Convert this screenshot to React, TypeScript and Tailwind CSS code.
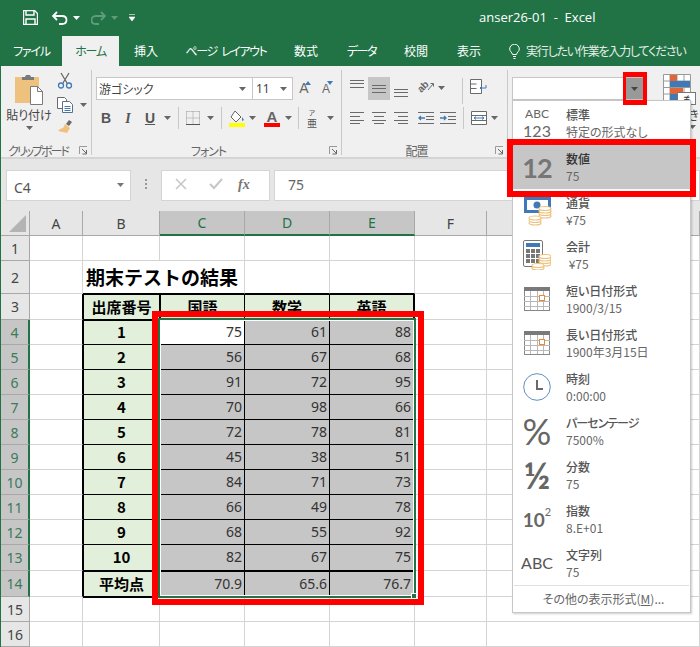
import type { ReactNode } from "react";

const students: Array<[number, number, number, number]> = [
  [1, 75, 61, 88],
  [2, 56, 67, 68],
  [3, 91, 72, 95],
  [4, 70, 98, 66],
  [5, 72, 78, 81],
  [6, 45, 38, 51],
  [7, 84, 71, 73],
  [8, 66, 49, 78],
  [9, 68, 55, 92],
  [10, 82, 67, 75],
];

const Caret = ({ color = "#666" }: { color?: string }) => (
  <svg width="7" height="4" viewBox="0 0 7 4" className="shrink-0">
    <path d="M0 0h7L3.5 4z" fill={color} />
  </svg>
);

const Launcher = () => (
  <svg width="9" height="9" viewBox="0 0 9 9" className="shrink-0">
    <path d="M.5 8V.5H8" fill="none" stroke="#999" />
    <path d="M3 3l4 4M7.500 4v4h-4" fill="none" stroke="#666" />
  </svg>
);

const Sep = () => <div className="mx-[5px] h-[22px] w-px bg-[#c8c8c8]" />;

const Lines = ({ rows, w = 15, h = 16 }: { rows: Array<[number, number, number]>; w?: number; h?: number }) => (
  <svg width={w} height={h} viewBox={`0 0 ${w} ${h}`} className="shrink-0">
    {rows.map(([x1, x2, y]) => (
      <path key={`${x1}-${y}`} d={`M${x1} ${y + 0.5}H${x2}`} stroke="#6a6a6a" />
    ))}
  </svg>
);

const Group = ({ width, label, tight, children }: { width: string; label: string; tight?: boolean; children: ReactNode }) => (
  <div className={`relative mt-[4px] mb-[2px] flex shrink-0 flex-col border-r border-[#c8c8c8] ${width}`}>
    <div className="h-[76px] shrink-0">{children}</div>
    <div
      className={[
        "flex h-[9px] items-center justify-center pr-[16px] text-[12px] whitespace-nowrap text-[#666]",
        tight ? "tracking-[-2px]" : "tracking-[-1px]",
      ].join(" ")}
    >
      {label}
    </div>
    <div className="absolute right-[3px] bottom-0">
      <Launcher />
    </div>
  </div>
);

const ClipboardGroup = () => (
  <Group width="w-[91px]" label="クリップボード" tight>
    <div className="flex pt-[4px]">
      <div className="flex w-[56px] flex-col items-center">
        <svg width="30" height="32" viewBox="0 0 30 32">
          <rect x="1" y="3" width="24" height="26" fill="#eec27e" />
          <path d="M8 6V3h3l1-2h4l1 2h3v3z" fill="#7a7a7a" />
          <path d="M16.500 12.500h7l5 5v13h-12z" fill="#fff" stroke="#7a7a7a" />
          <path d="M23.500 12.500v5h5" fill="none" stroke="#7a7a7a" />
        </svg>
        <div className="mt-[1px] text-[12px] leading-[16px] text-[#444]">貼り付け</div>
        <div className="mt-[3px]">
          <Caret />
        </div>
      </div>
      <div className="-mt-[2px] flex flex-col items-start">
        <svg width="16" height="17" viewBox="0 0 16 17" className="mb-[8px]">
          <path d="M4 1l6 10M12 1L6 11" stroke="#6a6a6a" strokeWidth="1.300" fill="none" />
          <circle cx="4" cy="13.500" r="2.500" fill="none" stroke="#3f79b8" strokeWidth="1.300" />
          <circle cx="12" cy="13.500" r="2.500" fill="none" stroke="#3f79b8" strokeWidth="1.300" />
        </svg>
        <div className="mb-[5px] flex items-center gap-[7px]">
          <svg width="16" height="16" viewBox="0 0 16 16">
            <path d="M.5.500h7l2 2v9h-9z" fill="#fff" stroke="#6a6a6a" />
            <path d="M5.500 4.500h7l3 3v8h-10z" fill="#fff" stroke="#5b6f8a" />
            <path d="M7.500 9.500h6M7.500 11.500h6M7.500 13.500h6" stroke="#3f79b8" />
          </svg>
          <Caret />
        </div>
        <svg width="16" height="16" viewBox="0 0 16 16">
          <path d="M9 6l3-4 3 2-3 4z" fill="#6a6a6a" />
          <path d="M8 6l5 4-3 5-9-2 2-2 3-1z" fill="#eec27e" />
        </svg>
      </div>
    </div>
  </Group>
);

const FontGroup = () => (
  <Group width="w-[250px]" label="フォント">
    <div className="flex h-[36px] items-start pt-[7px] pl-[4px]">
      <div className="flex h-[23px] w-[157px] items-center justify-between border border-[#c6c6c6] bg-white pr-[6px] pl-[2px] text-[12px] text-[#444]">
        <span>游ゴシック</span>
        <Caret />
      </div>
      <div className="flex h-[23px] w-[40px] items-center justify-between border border-l-0 border-[#c6c6c6] bg-white pr-[5px] pl-[3px] text-[12px] text-[#444]">
        <span className="font-['Noto_Sans']">11</span>
        <Caret />
      </div>
      <div className="relative flex h-[23px] w-[22px] items-center justify-center font-['Liberation_Sans'] text-[14px] text-[#666]">
        A
        <svg width="6" height="4" viewBox="0 0 6 4" className="absolute top-[4px] right-[4px]">
          <path d="M0 4h6L3 0z" fill="#3f79b8" />
        </svg>
      </div>
      <div className="relative flex h-[23px] w-[22px] items-center justify-center font-['Liberation_Sans'] text-[12px] text-[#666]">
        A
        <svg width="6" height="4" viewBox="0 0 6 4" className="absolute top-[4px] right-[4px]">
          <path d="M0 0h6L3 4z" fill="#3f79b8" />
        </svg>
      </div>
    </div>
    <div className="flex h-[24px] items-center pl-[3px] font-['Liberation_Sans'] text-[14px] text-[#555]">
      <span className="w-[22px] text-center font-bold">B</span>
      <span className="w-[22px] text-center font-['Liberation_Serif'] font-bold italic">I</span>
      <span className="w-[22px] text-center font-bold underline">U</span>
      <span className="flex w-[12px] justify-center">
        <Caret />
      </span>
      <Sep />
      <svg width="14" height="14" viewBox="0 0 14 14" className="mr-[7px] ml-[2px]">
        <path d="M.5.500h13M.5 7h13M.5 .500v13M7 .500v13M13.500 .500v13" stroke="#999" strokeDasharray="1 1" fill="none" />
        <path d="M0 13.500h14" stroke="#555" />
      </svg>
      <Caret />
      <span className="w-[2px]" />
      <Sep />
      <span className="flex w-[20px] flex-col items-center">
        <svg width="16" height="13" viewBox="0 0 16 13">
          <path d="M6 1l6 6-5 5-5-5z" fill="#fff" stroke="#666" />
          <path d="M13 7l2 3-2 1z" fill="#3f79b8" />
        </svg>
        <span className="h-[4px] w-[16px] bg-[#ffff00]" />
      </span>
      <span className="ml-[1px] flex w-[9px] justify-center">
        <Caret />
      </span>
      <span className="ml-[4px] flex w-[22px] flex-col items-center font-bold leading-[13px]">
        <span className="text-[15px] leading-[13px] text-[#666]">A</span>
        <span className="h-[4px] w-[16px] bg-[#ff0000]" />
      </span>
      <span className="flex w-[10px] justify-center">
        <Caret />
      </span>
      <Sep />
      <span className="flex w-[16px] flex-col items-center font-['Noto_Sans_CJK_JP']">
        <span className="text-[8px] leading-[10px]">ァ</span>
        <span className="text-[10px] leading-[12px]">亜</span>
      </span>
      <span className="ml-[7px]">
        <Caret />
      </span>
    </div>
  </Group>
);

const AlignGroup = () => (
  <Group width="w-[166px]" label="配置">
    <div className="flex h-[36px] items-start pt-[7px] pl-[8px]">
      <div className="flex h-[23px] w-[18px] items-start pt-[3px]">
        <Lines rows={[[0, 14, 0], [0, 14, 3], [0, 14, 7]]} />
      </div>
      <div className="flex h-[23px] w-[22px] items-center justify-center bg-[#c6c6c6]">
        <Lines w={14} h={8} rows={[[0, 14, 0], [0, 14, 3], [0, 14, 7]]} />
      </div>
      <div className="flex h-[23px] w-[28px] items-end pb-[3px] pl-[4px]">
        <Lines w={14} h={8} rows={[[0, 14, 0], [0, 14, 3], [0, 14, 7]]} />
      </div>
      <div className="relative mt-[3px] h-[15px] w-[17px]">
        <span className="absolute top-[1px] -left-[1px] -rotate-45 font-['Liberation_Sans'] text-[10px] leading-[11px] font-bold text-[#666]">ab</span>
        <svg width="17" height="15" viewBox="0 0 17 15" className="absolute top-0 left-0">
          <path d="M10 10l5-6M15.500 3.500h-3M15.500 3.500v3" stroke="#6a6a6a" fill="none" />
        </svg>
      </div>
      <div className="mt-[9px] ml-[3px]">
        <Caret />
      </div>
      <div className="mt-[1px] mr-[7px] ml-[17px] h-[26px] w-px bg-[#c8c8c8]" />
      <svg width="17" height="15" viewBox="0 0 17 15" className="mt-[2px]">
        <path d="M.5.500h11v14h-11zM.5 5h6M.5 9.500h6" fill="#fff" stroke="#6a6a6a" />
        <path d="M16 6v3h-6m2-2l-2 2 2 2" fill="none" stroke="#3f79b8" />
      </svg>
    </div>
    <div className="flex h-[24px] items-center pl-[8px]">
      <Lines w={22} h={12} rows={[[0, 14, 0], [0, 10, 4], [0, 14, 8], [0, 10, 11]]} />
      <Lines w={22} h={12} rows={[[0, 14, 0], [2, 12, 4], [0, 14, 8], [2, 12, 11]]} />
      <Lines w={24} h={12} rows={[[0, 14, 0], [4, 14, 4], [0, 14, 8], [4, 14, 11]]} />
      <svg width="22" height="12" viewBox="0 0 22 12">
        <path d="M7 6H1m2-2L1 6l2 2" stroke="#3f79b8" fill="none" strokeWidth="1.300" />
        <path d="M0 .500h16M8 4.500h8M8 7.500h8M0 11.500h16" stroke="#6a6a6a" />
      </svg>
      <svg width="23" height="12" viewBox="0 0 23 12">
        <path d="M0 6h6M4 4l2 2-2 2" stroke="#3f79b8" fill="none" strokeWidth="1.300" />
        <path d="M0 .500h16M8 4.500h8M8 7.500h8M0 11.500h16" stroke="#6a6a6a" />
      </svg>
      <div className="mr-[7px] h-[22px] w-px bg-[#c8c8c8]" />
      <svg width="16" height="14" viewBox="0 0 16 14">
        <path d="M.5.500h15v13H.5zM.5 4.500h15M.5 9.500h15" fill="#fff" stroke="#6a6a6a" />
        <path d="M3 7h10M5 5.500L3 7l2 1.500M11 5.500L13 7l-2 1.500" stroke="#3f79b8" fill="none" />
      </svg>
      <div className="ml-[4px]">
        <Caret />
      </div>
    </div>
  </Group>
);

const NumberGroup = () => (
  <div className="flex flex-1 pt-[11px] pl-[4px]">
    <div className="flex h-[23px] w-[132px] shrink-0 border border-[#c6c6c6] bg-white">
      <div className="w-[113px]" />
      <div className="flex w-[17px] items-center justify-center bg-[#999]">
        <Caret color="#444" />
      </div>
    </div>
    <div className="ml-[19px] flex w-[37px] shrink-0 flex-col items-start">
      <div className="relative -mt-[3px] h-[28px] w-[30px]">
        <svg width="28" height="27" viewBox="0 0 28 27">
          <path d="M.5.500h27v26H.5zM.5 7h27M.5 13.500h27M.5 20h27M7 .500v26M14 .500v26M21 .500v26" fill="#fff" stroke="#999" />
          <rect x="7" y="1" width="7" height="6" fill="#e0663a" />
          <rect x="7" y="7" width="20" height="6" fill="#3f79b8" />
          <rect x="7" y="14" width="13" height="6" fill="#e0663a" />
          <rect x="7" y="20" width="7" height="6" fill="#3f79b8" />
        </svg>
        <div className="absolute top-[18px] left-[14px] flex h-[13px] w-[19px] items-center justify-center border border-[#777] bg-white font-['Liberation_Sans'] text-[11px] leading-none text-[#333]">
          ≠
        </div>
      </div>
      <div className="mt-[5px] -ml-[11px] text-[12px] leading-[16px] whitespace-nowrap text-[#444]">条件付き</div>
      <div className="mt-[2px] ml-[26px]">
        <Caret />
      </div>
    </div>
  </div>
);

const Ribbon = () => (
  <div className="flex h-[93px] border-b-2 border-[#d4d4d4] bg-[#f0f0f0]">
    <ClipboardGroup />
    <FontGroup />
    <AlignGroup />
    <NumberGroup />
  </div>
);

const tabs: Array<[string, string]> = [
  ["ファイル", "w-[61px] tracking-[-1.2px]"],
  ["ホーム", "w-[57px] tracking-[-1.2px]"],
  ["挿入", "w-[54px]"],
  ["ページ レイアウト", "w-[106px] tracking-[-1.4px] [word-spacing:3px]"],
  ["数式", "w-[54px]"],
  ["データ", "w-[57px] tracking-[-1.5px]"],
  ["校閲", "w-[52px]"],
  ["表示", "w-[54px]"],
];

const TitleBar = () => (
  <div className="flex h-[36px] items-center bg-[#217346] pb-[1px]">
    <svg width="15" height="15" viewBox="0 0 15 15" className="ml-[22px]">
      <path d="M.5.500h11l3 3v11H.5z" fill="none" stroke="#fff" strokeWidth="1.400" />
      <path d="M3 1v4h8V1M3 14V9h9v5" fill="none" stroke="#fff" strokeWidth="1.400" />
    </svg>
    <svg width="16" height="14" viewBox="0 0 16 14" className="ml-[14px]">
      <path d="M5 1L1 5l4 4M1 5h9c6 0 6 8 0 8H7" fill="none" stroke="#fff" strokeWidth="1.800" />
    </svg>
    <div className="ml-[5px]">
      <Caret color="#fff" />
    </div>
    <svg width="15" height="14" viewBox="0 0 15 14" className="ml-[11px]">
      <path d="M10 1l4 4-4 4M14 5H5c-6 0-6 8 0 8h3" fill="none" stroke="#5f9b7d" strokeWidth="1.800" />
    </svg>
    <div className="ml-[5px]">
      <Caret color="#5f9b7d" />
    </div>
    <svg width="6" height="7" viewBox="0 0 6 7" className="ml-[11px]">
      <path d="M0 .500h6M0 3h6L3 7z" fill="#fff" stroke="#fff" strokeWidth=".6" />
    </svg>
    <div className="ml-[344px] font-['Open_Sans'] text-[13px] whitespace-pre text-white">anser26-01  -  Excel</div>
  </div>
);

const TabBar = () => (
  <div className="flex h-[30px] items-stretch bg-[#217346] text-[12px] text-white">
    {tabs.map(([name, width]) => (
      <div
        key={name}
        className={[
          "flex shrink-0 items-center justify-center whitespace-pre",
          width,
          name === "ホーム" ? "bg-[#f0f0f0] text-[#217346]" : "",
        ].join(" ")}
      >
        {name}
      </div>
    ))}
    <div className="ml-[13px] flex items-center gap-[6px] whitespace-nowrap text-[#e6efe9]">
      <svg width="11" height="15" viewBox="0 0 11 15">
        <path d="M3.500 10.500C3 8 .7 7.500.7 5a4.800 4.800 0 0 1 9.600 0c0 2.500-2.300 3-2.800 5.500zM4 12.500h3M4.500 14.500h2" fill="none" stroke="#fff" />
      </svg>
      <span className="tracking-[-1.2px]">実行したい作業を入力してください</span>
    </div>
  </div>
);

const FormulaBar = () => (
  <div className="flex h-[52px] items-start bg-[#e6e6e6] pt-[11px] pl-[5px]">
    <div className="flex h-[31px] w-[125px] items-center justify-between border border-[#d4d4d4] bg-white pt-[3px] pr-[6px] pl-[7px] text-[14px] text-[#555]">
      <span className="font-['Noto_Sans']">C4</span>
      <span className="-mt-[5px]">
        <Caret color="#777" />
      </span>
    </div>
    <div className="flex h-[31px] w-[30px] flex-col items-center justify-center gap-[2px] pb-[4px]">
      <span className="h-[2px] w-[2px] bg-[#999]" />
      <span className="h-[2px] w-[2px] bg-[#999]" />
      <span className="h-[2px] w-[2px] bg-[#999]" />
    </div>
    <div className="flex h-[31px] w-[109px] items-center border border-[#d4d4d4] bg-white pb-[3px]">
      <svg width="12" height="12" viewBox="0 0 12 12" className="ml-[13px]">
        <path d="M1 1l10 10M11 1L1 11" stroke="#c6c6c6" strokeWidth="1.500" />
      </svg>
      <svg width="14" height="12" viewBox="0 0 14 12" className="ml-[22px]">
        <path d="M1 6l4 4 8-9" stroke="#c6c6c6" strokeWidth="2" fill="none" />
      </svg>
      <span className="ml-[15px] font-['Liberation_Serif'] text-[14px] font-bold text-[#777] italic">fx</span>
    </div>
    <div className="ml-[4px] flex h-[31px] flex-1 items-center border border-[#d4d4d4] bg-white pb-[3px] pl-[13px] font-['Noto_Sans'] text-[14px] text-[#666]">
      75
    </div>
  </div>
);

const columnClass = (col: string): string => {
  const selected = col === "C" || col === "D" || col === "E";
  return [
    "flex items-center justify-center border-r border-b font-['Noto_Sans'] text-[14px]",
    selected
      ? "border-r-[#a8a8a8] border-b-2 border-b-[#217346] bg-[#c6c6c6] text-[#217346]"
      : "border-[#a8a8a8] bg-[#e6e6e6] text-[#444]",
  ].join(" ");
};

const RowHead = ({ n }: { n: number }) => {
  const selected = n >= 4 && n <= 14;
  return (
    <div
      className={[
        "flex items-center justify-center border-b font-['Noto_Sans'] text-[14px]",
        selected
          ? "border-r-2 border-r-[#217346] border-b-[#a8a8a8] bg-[#c6c6c6] text-[#3b7a5a]"
          : "border-r border-[#a8a8a8] bg-[#e6e6e6] text-[#444]",
      ].join(" ")}
    >
      {n}
    </div>
  );
};

const Cell = ({ col, row, children }: { col: string; row: number; children?: ReactNode }) => {
  const tableCol = col === "B" || col === "C" || col === "D" || col === "E";
  const inside = tableCol && row >= 3 && row <= 14;
  const head = inside && (col === "B" || row === 3);
  const body = inside && !head;
  const classes = [
    "flex items-center border-r border-b border-[#d4d4d4] whitespace-nowrap",
    inside ? "border-r-black border-b-black" : "",
    head ? "justify-center bg-[#e2efda] text-[15px] font-bold text-black [font-feature-settings:normal]" : "",
    body ? "justify-end pr-[2px] pb-[2px] font-['Noto_Sans'] text-[#333]" : "",
    body && !(row === 4 && col === "C") ? "bg-[#c6c6c6]" : "",
    inside && col === "B" ? "border-l border-l-black font-['Noto_Sans_CJK_JP']" : "",
    inside && col === "C" ? "border-l border-l-black" : "",
    inside && col === "E" ? "border-r-2" : "",
    inside && (row === 3 || row === 4 || row === 14) ? "border-t border-t-black" : "",
    col === "A" && row >= 3 && row <= 14 ? "border-r-black" : "",
    row === 2 && tableCol ? "border-b-black" : "",
    row === 2 && col === "B" ? "border-r-0" : "",
    row === 15 && tableCol ? "border-t border-t-black" : "",
  ].join(" ");
  return <div className={classes}>{children}</div>;
};

const tableCell = (row: number, col: string): ReactNode => {
  if (row === 2 && col === "B") {
    return <span className="pl-[3px] text-[19px] font-bold text-black [font-feature-settings:normal]">期末テストの結果</span>;
  }
  if (row === 3) {
    return { B: "出席番号", C: "国語", D: "数学", E: "英語" }[col] ?? null;
  }
  if (row >= 4 && row <= 13) {
    const s = students[row - 4];
    return { B: s[0], C: s[1], D: s[2], E: s[3] }[col] ?? null;
  }
  if (row === 14) {
    return { B: "平均点", C: "70.9", D: "65.6", E: "76.7" }[col] ?? null;
  }
  return null;
};

const Sheet = () => (
  <div className="relative grid h-[436px] grid-cols-[29px_53px_77px_85px_85px_85px_72px_1fr] grid-rows-[25px_25px_33px_26px_25px_25px_25px_25px_25px_25px_25px_25px_25px_26px_26px_25px_25px] bg-white text-[14px]">
    <div className="flex items-end justify-end border-r border-b border-[#a8a8a8] bg-[#e6e6e6] pr-[3px] pb-[3px]">
      <svg width="17" height="17" viewBox="0 0 17 17">
        <path d="M17 0v17H0z" fill="#b4b4b4" />
      </svg>
    </div>
    {["A", "B", "C", "D", "E", "F", "G"].map((col) => (
      <div key={col} className={columnClass(col)}>
        {col}
      </div>
    ))}
    {Array.from({ length: 16 }, (_, i) => i + 1).map((row) => (
      <div key={row} className="contents">
        <RowHead n={row} />
        {["A", "B", "C", "D", "E", "F", "G"].map((col) => (
          <Cell key={col} col={col} row={row}>
            {tableCell(row, col)}
          </Cell>
        ))}
      </div>
    ))}
    {/* selection outline + fill handle */}
    <div className="pointer-events-none absolute col-start-4 col-end-7 row-start-5 row-end-16 -top-[2px] -right-[1px] -bottom-[1px] -left-[2px] border-2 border-[#217346] shadow-[inset_0_0_0_1px_#fff]">
      <div className="absolute -right-[3px] -bottom-[3px] h-[6px] w-[6px] border border-white bg-[#217346]" />
    </div>
  </div>
);

const Coins = ({ x, y, n }: { x: number; y: number; n: number }) => (
  <g fill="#fff" stroke="#eec27e" strokeWidth="1.200">
    {Array.from({ length: n }, (_, i) => (
      <ellipse key={i} cx={x} cy={y - i * 2.500} rx="6" ry="2" />
    ))}
  </g>
);

const CurrencyIcon = () => (
  <svg width="29" height="30" viewBox="0 0 29 30">
    <rect x="1" y="1" width="27" height="16" fill="#3f79b8" />
    <rect x="4" y="4" width="21" height="10" fill="#fff" />
    <circle cx="14" cy="9" r="3.500" fill="#3f79b8" />
    <Coins x="22" y="20" n={4} />
    <Coins x="12" y="27" n={3} />
  </svg>
);

const CalcIcon = () => (
  <svg width="28" height="30" viewBox="0 0 28 30">
    <rect x=".5" y=".5" width="19" height="26" rx="1.500" fill="#fff" stroke="#777" />
    <rect x="3" y="3" width="14" height="4" fill="#3f79b8" />
    <g fill="#777">
      {[0, 1, 2].flatMap((r) =>
        [0, 1, 2].map((c) => <rect key={`${r}${c}`} x={3 + c * 5} y={9 + r * 5} width="4" height="4" />),
      )}
    </g>
    <Coins x="22" y="24" n={4} />
    <Coins x="15" y="28" n={2} />
  </svg>
);

const CalendarIcon = () => (
  <svg width="26" height="24" viewBox="0 0 26 24">
    <rect x=".5" y=".5" width="25" height="23" fill="#fff" stroke="#888" />
    <rect x="0" y="0" width="26" height="4" fill="#7a7a7a" />
    <path d="M6.500 4v19M13.500 4v19M19.500 4v19M0 9.500h26M0 14.500h26M0 19.500h26" stroke="#b8b8b8" />
    <rect x="15.500" y="8.500" width="5" height="5" fill="#fff" stroke="#ed8a2f" />
  </svg>
);

const ClockIcon = () => (
  <svg width="28" height="28" viewBox="0 0 28 28">
    <circle cx="14" cy="14" r="13.300" fill="#fff" stroke="#5f8fc4" />
    <path d="M14 7v9h6" fill="none" stroke="#6a6a6a" strokeWidth="2" />
  </svg>
);

const formats: Array<{ title: string; sub: string; icon: ReactNode; active?: boolean }> = [
  {
    title: "標準",
    sub: "特定の形式なし",
    icon: (
      <div className="flex flex-col items-center font-['Lato'] text-[#666]">
        <span className="text-[12px] leading-[15px]">ABC</span>
        <span className="text-[16px] leading-[19px]">123</span>
      </div>
    ),
  },
  {
    title: "数値",
    sub: "75",
    active: true,
    icon: <span className="font-['Lato'] text-[27px] leading-none font-bold tracking-[-1px] text-[#767676]">12</span>,
  },
  { title: "通貨", sub: "¥75", icon: <CurrencyIcon /> },
  { title: "会計", sub: " ¥75", icon: <CalcIcon /> },
  { title: "短い日付形式", sub: "1900/3/15", icon: <CalendarIcon /> },
  { title: "長い日付形式", sub: "1900年3月15日", icon: <CalendarIcon /> },
  { title: "時刻", sub: "0:00:00", icon: <ClockIcon /> },
  {
    title: "パーセンテージ",
    sub: "7500%",
    icon: <span className="font-['Lato'] text-[36px] leading-none text-[#666]">%</span>,
  },
  {
    title: "分数",
    sub: "75",
    icon: <span className="font-['Lato'] text-[36px] leading-none font-bold text-[#666]">½</span>,
  },
  {
    title: "指数",
    sub: "8.E+01",
    icon: (
      <span className="flex items-start font-['Lato'] text-[19px] leading-none font-bold text-[#666]">
        10<span className="-mt-[4px] text-[11px] font-normal">2</span>
      </span>
    ),
  },
  {
    title: "文字列",
    sub: "75",
    icon: <span className="font-['Lato'] text-[16px] leading-none text-[#555]">ABC</span>,
  },
];

const FormatMenu = () => (
  <div className="absolute top-[100px] left-[511px] w-[179px] border border-[#c6c6c6] bg-white shadow-[1px_1px_2px_rgba(0,0,0,0.2)]">
    {formats.map((f) => (
      <div key={f.title} className={`flex h-[44px] items-center ${f.active ? "bg-[#c6c6c6]" : ""}`}>
        <div className="flex w-[48px] shrink-0 items-center justify-center">{f.icon}</div>
        <div className="ml-[5px] text-[12px] leading-[17px] text-[#666]">
          <div
            className={[
              "font-medium",
              f.active ? "text-[#333]" : "text-[#555]",
              f.title === "パーセンテージ" ? "tracking-[-1px]" : "",
            ].join(" ")}
          >
            {f.title}
          </div>
          <div className="whitespace-pre">{f.sub}</div>
        </div>
      </div>
    ))}
    <div className="mx-[1px] flex h-[27px] items-center justify-center border-t border-[#e0e0e0] pl-[4px] text-[12px] text-[#666]">
      その他の表示形式(<span className="underline">M</span>)...
    </div>
  </div>
);

export default function App() {
  return (
    <div className="relative h-[647px] w-[700px] overflow-hidden border-l border-[#217346] font-['Noto_Sans_CJK_JP','Noto_Sans',sans-serif] [font-feature-settings:'palt']">
      <TitleBar />
      <TabBar />
      <Ribbon />
      <FormulaBar />
      <Sheet />
      <FormatMenu />
      {/* red callouts drawn over the screenshot */}
      <div className="pointer-events-none absolute top-[72px] left-[622px] h-[33px] w-[24px] border-y-[5px] border-r-[4px] border-l-[3px] border-[#ff0000]" />
      <div className="pointer-events-none absolute top-[139px] left-[506px] h-[58px] w-[189px] border-[6px] border-[#ff0000]" />
      <div className="pointer-events-none absolute top-[311px] left-[151px] h-[294px] w-[272px] border-[6px] border-[#ff0000]" />
    </div>
  );
}
